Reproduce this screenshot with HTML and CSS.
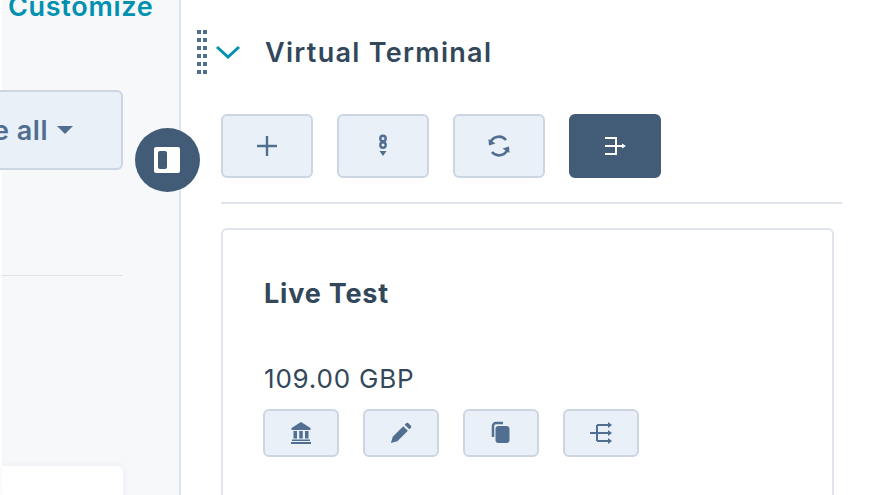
FILE: index.html
```html
<!DOCTYPE html>
<html lang="en">
<head>
    <meta charset="UTF-8">
    <title>Virtual Terminal</title>
    <link rel="stylesheet" href="styles.css">
</head>
<body>
    <div class="sidebar">
        <a class="customize">Customize</a>
        <button class="sort-button"><span>Manage all</span><i class="caret"></i></button>
        <div class="side-rule"></div>
        <div class="side-card"></div>
        <button class="collapse-toggle" aria-label="Toggle sidebar">
            <svg width="26" height="26" viewBox="0 0 26 26"><rect width="26" height="26" rx="2" fill="#fff"/><rect x="4" y="4" width="9" height="18" rx="2" fill="#425b76"/></svg>
        </button>
    </div>
    <div class="main">
        <div class="panel-head">
            <div class="drag-dots">
                <i></i><i></i><i></i><i></i><i></i><i></i><i></i><i></i><i></i><i></i><i></i><i></i>
            </div>
            <svg class="chevron" width="26" height="14" viewBox="0 0 26 14"><path d="M2 2l11 10L24 2" fill="none" stroke="#0091ae" stroke-width="3"/></svg>
            <h2>Virtual Terminal</h2>
        </div>
        <div class="toolbar">
            <button class="icon-btn">
                <svg width="24" height="24" viewBox="0 0 24 24"><path d="M12 2v20M2 12h20" stroke="#516f90" stroke-width="2.4" fill="none"/></svg>
            </button>
            <button class="icon-btn">
                <svg width="24" height="24" viewBox="0 0 24 24" fill="none" stroke="#516f90" stroke-width="2.4"><circle cx="12" cy="4.500" r="2.700"/><circle cx="12" cy="11" r="2.700"/><path d="M8.500 17h7L12 22z" fill="#516f90" stroke="none"/></svg>
            </button>
            <button class="icon-btn">
                <svg width="24" height="24" viewBox="0 0 24 24" fill="none" stroke="#516f90" stroke-width="2.700"><path d="M3 10a9.200 9.200 0 0 1 16-4"/><path d="M21 14a9.200 9.200 0 0 1-16 4"/><path d="M1.500 5l.5 6.500 6.500-2z" fill="#516f90" stroke="none"/><path d="M22.500 19l-.5-6.500-6.500 2z" fill="#516f90" stroke="none"/></svg>
            </button>
            <button class="icon-btn active">
                <svg width="24" height="24" viewBox="0 0 24 24" fill="none" stroke="#fff" stroke-width="2"><path d="M2 4h11v16H2M2 12h18"/><path d="M19 9.500l4 2.500-4 2.500z" fill="#fff" stroke="none"/></svg>
            </button>
        </div>
        <div class="rule"></div>
        <div class="card">
            <h3>Live Test</h3>
            <p class="amount">109.00 GBP</p>
            <div class="card-actions">
                <button class="icon-btn small">
                    <svg width="22" height="22" viewBox="0 0 22 22" fill="#516f90"><path d="M11 0L1.500 6V8h19V6z"/><path d="M3.500 9h3.500v7.500H3.500zM9.250 9h3.500v7.500h-3.500zM15 9h3.500v7.500H15z"/><path d="M2 17.500h18v1.500H2zM1 20h20v2H1z"/></svg>
                </button>
                <button class="icon-btn small">
                    <svg width="22" height="22" viewBox="0 0 24 24" fill="#516f90"><path d="M1 23l2-7L14.500 4.500l5 5L8 21z"/><path d="M16 3l1.800-1.800a1.500 1.500 0 0 1 2 0l3 3a1.500 1.500 0 0 1 0 2L21 8z"/></svg>
                </button>
                <button class="icon-btn small">
                    <svg width="22" height="24" viewBox="0 0 22 24"><path d="M3 16V5a3 3 0 0 1 3-3h7" fill="none" stroke="#516f90" stroke-width="2.500"/><rect x="5.500" y="5" width="14" height="17" rx="3" fill="#516f90"/></svg>
                </button>
                <button class="icon-btn small">
                    <svg width="24" height="24" viewBox="0 0 24 24" fill="none" stroke="#516f90" stroke-width="2"><path d="M1 12h21M8 4v16M8 4h14M8 20h14"/><path d="M19 1l4 3-4 3zM19 9l4 3-4 3zM19 17l4 3-4 3z" fill="#516f90" stroke="none"/></svg>
                </button>
            </div>
        </div>
    </div>
</body>
</html>
```

FILE: styles.css
```css
html {
    overflow: hidden;
}
body {
    margin: 0;
    height: 495px;
    display: flex;
    overflow: hidden;
    background-color: #ffffff;
    font-family: 'Inter', 'Liberation Sans', sans-serif;
    color: #33475b;
}
button {
    font-family: inherit;
}
.sidebar {
    position: relative;
    flex: none;
    width: 177px;
    margin-left: 2px;
    background-color: #f6f8fa;
    border-right: 2px solid #dfe3eb;
    display: flex;
    flex-direction: column;
    align-items: flex-end;
}
.customize {
    align-self: flex-start;
    margin: -11px 0 0 6px;
    font-size: 27px;
    line-height: 36px;
    font-weight: 600;
    letter-spacing: 0.7px;
    color: #0091ae;
}
.sort-button {
    width: 200px;
    height: 80px;
    margin: 65px 56px 0 0;
    flex: none;
    display: flex;
    align-items: center;
    justify-content: flex-end;
    gap: 9px;
    padding: 0 48px 0 0;
    background-color: #eaf0f8;
    border: 2px solid #cbd6e2;
    border-radius: 6px;
    color: #506e91;
    font-size: 27px;
    font-weight: 600;
    letter-spacing: 0.5px;
    white-space: nowrap;
    overflow: hidden;
}
.caret {
    border-left: 8px solid transparent;
    border-right: 8px solid transparent;
    border-top: 8px solid #506e91;
}
.side-rule {
    width: 121px;
    height: 1px;
    margin: 105px 56px 0 0;
    background-color: #dfe3eb;
}
.side-card {
    width: 121px;
    height: 29px;
    margin: 190px 56px 0 0;
    background-color: #ffffff;
    border-top-right-radius: 6px;
    box-shadow: 0 0 6px rgba(203, 214, 226, 0.35);
}
.collapse-toggle {
    position: absolute;
    left: 133px;
    top: 128px;
    width: 65px;
    height: 64px;
    padding: 0 2px 0 0;
    border: none;
    border-radius: 50%;
    background-color: #425b76;
    display: flex;
    align-items: center;
    justify-content: center;
}
.main {
    flex: 1;
    padding-left: 40px;
    min-width: 0;
    display: flex;
    flex-direction: column;
}
.panel-head {
    height: 114px;
    flex: none;
    display: flex;
    align-items: flex-start;
    margin-left: -24px;
}
.drag-dots {
    display: grid;
    grid-template-columns: 4px 4px;
    grid-auto-rows: 4px;
    column-gap: 2px;
    row-gap: 4px;
    margin-top: 30px;
}
.drag-dots i {
    background-color: #516f90;
}
.chevron {
    margin: 45px 0 0 8px;
}
.panel-head h2 {
    margin: 35px 0 0 24px;
    font-size: 27px;
    line-height: 36px;
    font-weight: 600;
    letter-spacing: 1.3px;
    color: #33475b;
}
.toolbar {
    display: flex;
    gap: 24px;
}
.icon-btn {
    width: 92px;
    height: 64px;
    padding: 0;
    background-color: #eaf0f8;
    border: 2px solid #cbd6e2;
    border-radius: 6px;
    display: flex;
    align-items: center;
    justify-content: center;
}
.icon-btn.active {
    background-color: #425b76;
    border-color: #425b76;
}
.icon-btn.small {
    width: 76px;
    height: 48px;
}
.rule {
    width: 621px;
    height: 2px;
    flex: none;
    margin-top: 24px;
    background-color: #dfe3eb;
}
.card {
    width: 613px;
    flex: 1;
    margin-top: 24px;
    box-sizing: border-box;
    padding: 46px 40px 0;
    border: 2px solid #dfe3eb;
    border-bottom: none;
    border-radius: 6px 6px 0 0;
    background-color: #ffffff;
}
.card h3 {
    margin: 0 0 0 1px;
    font-size: 27px;
    line-height: 36px;
    font-weight: 700;
    letter-spacing: 0.8px;
    color: #33475b;
}
.amount {
    margin: 49px 0 0 1px;
    font-size: 26px;
    line-height: 36px;
    letter-spacing: 0.8px;
    color: #33475b;
}
.card-actions {
    display: flex;
    gap: 24px;
    margin-top: 12px;
}
```
